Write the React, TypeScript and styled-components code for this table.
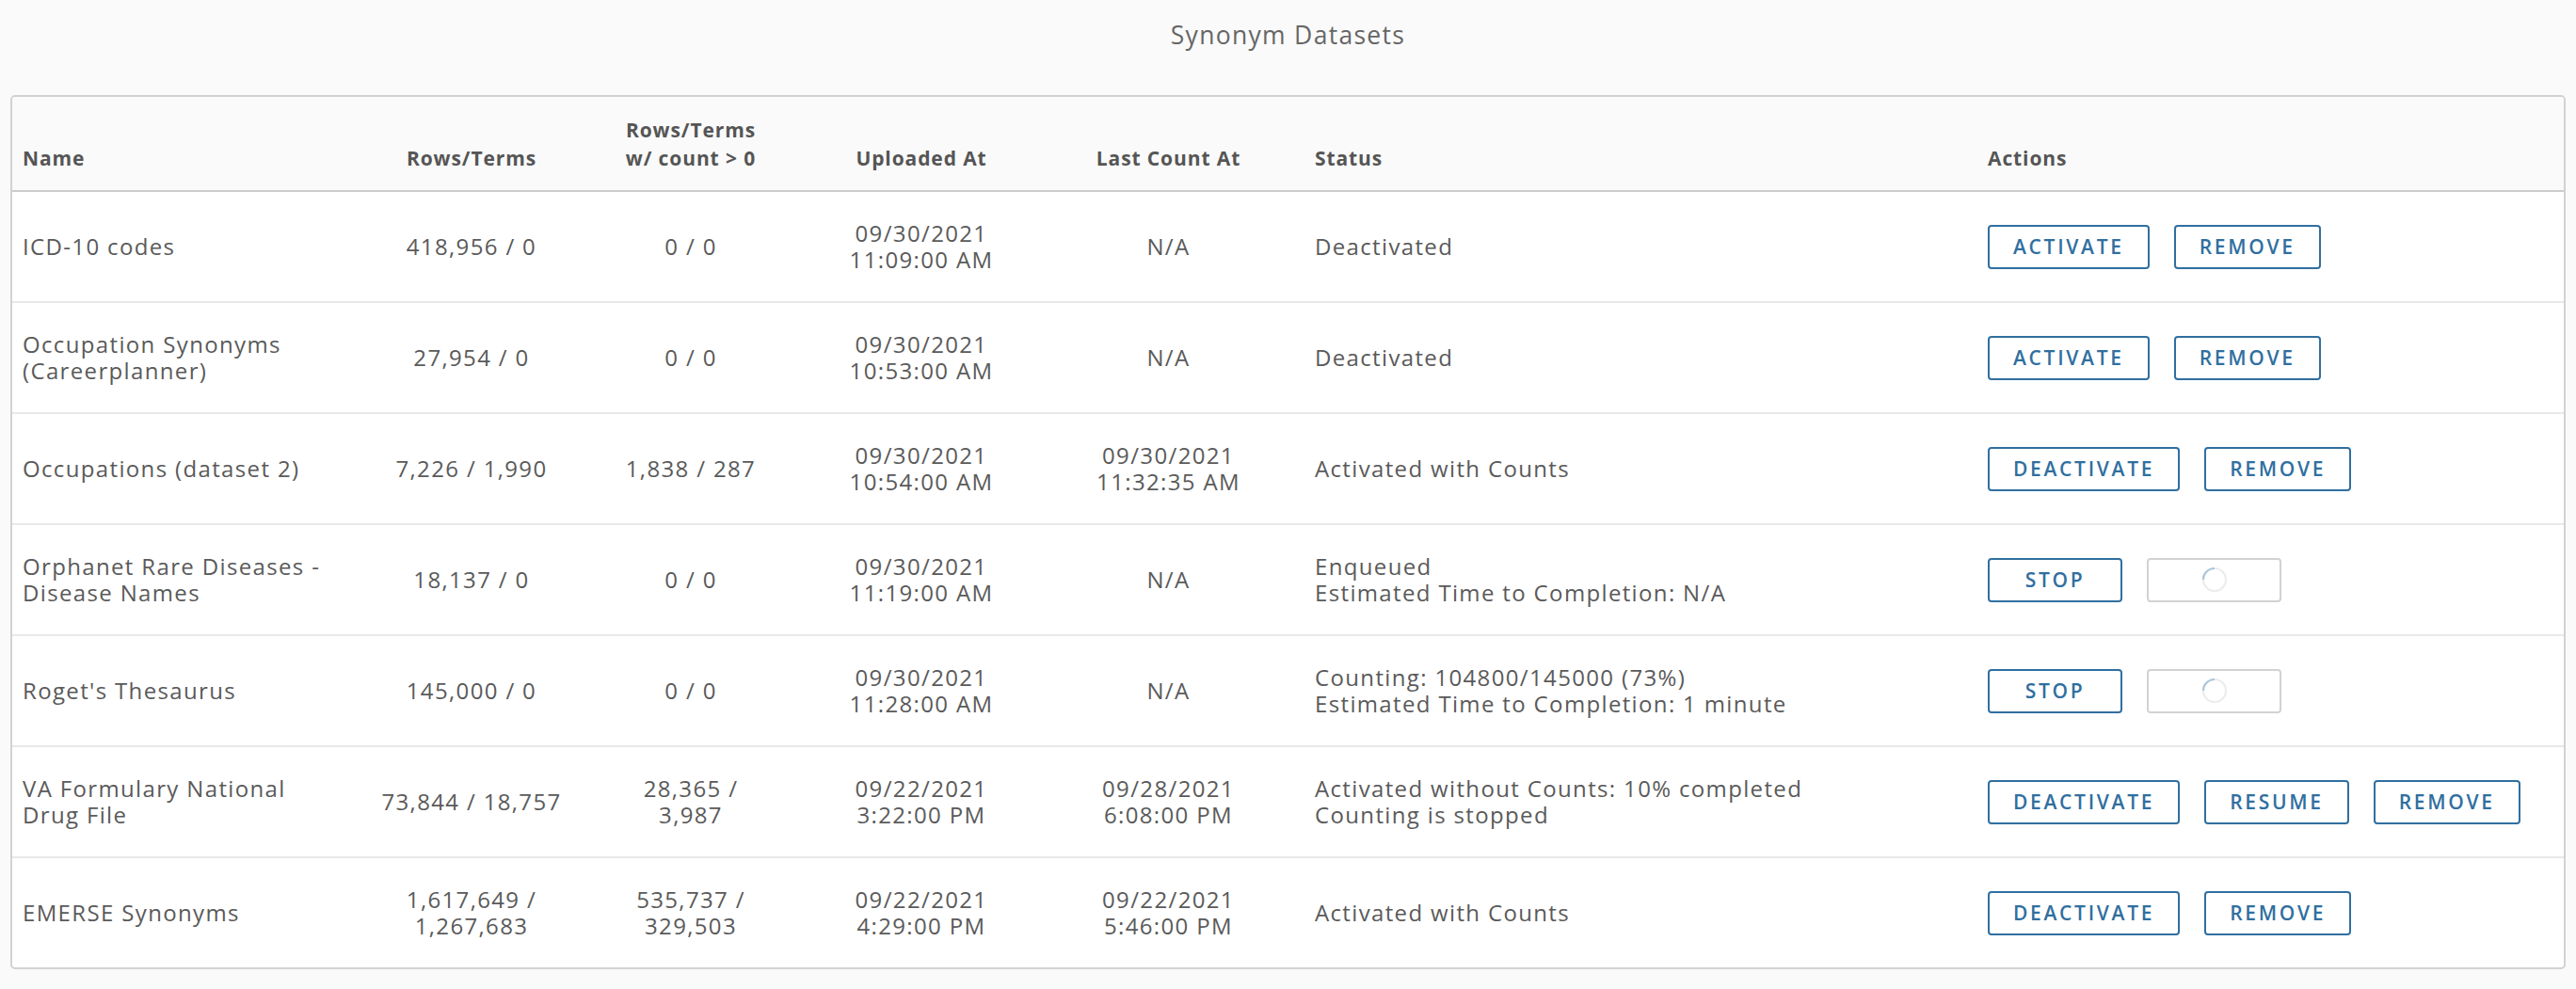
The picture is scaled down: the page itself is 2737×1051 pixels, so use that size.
import React from "react";
import styled, { createGlobalStyle } from "styled-components";

const GlobalStyle = createGlobalStyle`
  html, body {
    margin: 0;
    padding: 0;
    background: #fafafa;
  }
  body {
    font-family: "Open Sans", "Liberation Sans", sans-serif;
    color: #5a5a5a;
  }
`;

const COLUMNS = "382px 212px 254px 236px 289px 715px 1fr";

const Page = styled.div`
  display: flex;
  flex-direction: column;
  padding: 0 11px 21px;
  background: #fafafa;
`;

const Title = styled.h1`
  margin: 0;
  height: 101px;
  padding-top: 19px;
  box-sizing: border-box;
  text-align: center;
  font-size: 26.5px;
  line-height: 36px;
  font-weight: 400;
  letter-spacing: 1.3px;
  color: #666666;
`;

const Table = styled.div`
  border: 2px solid #d2d2d2;
  border-radius: 5px;
  overflow: hidden;
  background: #ffffff;
`;

const HeaderRow = styled.div`
  display: grid;
  grid-template-columns: ${COLUMNS};
  height: 101px;
  box-sizing: border-box;
  background: #fafafa;
  border-bottom: 2px solid #cccccc;
`;

const HeaderCell = styled.div<{ $align: "left" | "center" }>`
  display: flex;
  flex-direction: column;
  justify-content: flex-end;
  align-items: ${(p) => (p.$align === "center" ? "center" : "flex-start")};
  text-align: ${(p) => p.$align};
  padding: 0 11px 19px;
  font-size: 21px;
  line-height: 30px;
  font-weight: 700;
  letter-spacing: 0.9px;
  color: #555555;
  white-space: nowrap;
`;

const BodyRow = styled.div`
  display: grid;
  grid-template-columns: ${COLUMNS};
  height: 118px;
  box-sizing: border-box;
  border-bottom: 2px solid #e8e8e8;
  &:last-child {
    height: 116px;
    border-bottom: none;
  }
`;

const Cell = styled.div<{ $align: "left" | "center" }>`
  display: flex;
  flex-direction: column;
  justify-content: center;
  align-items: ${(p) => (p.$align === "center" ? "center" : "flex-start")};
  text-align: ${(p) => p.$align};
  padding: 0 11px;
  font-size: 24px;
  line-height: 28px;
  letter-spacing: 1.35px;
  color: #5a5a5a;
  white-space: nowrap;
`;

const Line = styled.span`
  display: block;
`;

const Actions = styled.div`
  display: flex;
  align-items: center;
  gap: 26px;
  padding: 0 11px;
`;

const ActionButton = styled.button`
  height: 47px;
  min-width: 143px;
  padding: 0 25px;
  box-sizing: border-box;
  display: inline-flex;
  align-items: center;
  justify-content: center;
  border: 2px solid #306fa0;
  border-radius: 4px;
  background: #ffffff;
  color: #306fa0;
  font-family: "Open Sans", "Liberation Sans", sans-serif;
  font-size: 21px;
  font-weight: 600;
  letter-spacing: 2.7px;
  cursor: pointer;

  &:disabled {
    border-color: #d2d2d2;
    cursor: default;
  }
`;

const Spinner = () => (
  <svg width="28" height="28" viewBox="0 0 28 28" aria-hidden="true">
    <circle cx="14" cy="14" r="12" fill="none" stroke="#ececec" strokeWidth="2.2" />
    <path d="M2 14 A12 12 0 0 1 14 2" fill="none" stroke="#aac6db" strokeWidth="2.2" />
  </svg>
);

type Action = { label?: string; busy?: boolean };

type Dataset = {
  name: string[];
  rows: string[];
  counts: string[];
  uploaded: string[];
  last: string[];
  status: string[];
  actions: Action[];
};

const DATA: Dataset[] = [
  {
    name: ["ICD-10 codes"],
    rows: ["418,956 / 0"],
    counts: ["0 / 0"],
    uploaded: ["09/30/2021", "11:09:00 AM"],
    last: ["N/A"],
    status: ["Deactivated"],
    actions: [{ label: "ACTIVATE" }, { label: "REMOVE" }],
  },
  {
    name: ["Occupation Synonyms", "(Careerplanner)"],
    rows: ["27,954 / 0"],
    counts: ["0 / 0"],
    uploaded: ["09/30/2021", "10:53:00 AM"],
    last: ["N/A"],
    status: ["Deactivated"],
    actions: [{ label: "ACTIVATE" }, { label: "REMOVE" }],
  },
  {
    name: ["Occupations (dataset 2)"],
    rows: ["7,226 / 1,990"],
    counts: ["1,838 / 287"],
    uploaded: ["09/30/2021", "10:54:00 AM"],
    last: ["09/30/2021", "11:32:35 AM"],
    status: ["Activated with Counts"],
    actions: [{ label: "DEACTIVATE" }, { label: "REMOVE" }],
  },
  {
    name: ["Orphanet Rare Diseases -", "Disease Names"],
    rows: ["18,137 / 0"],
    counts: ["0 / 0"],
    uploaded: ["09/30/2021", "11:19:00 AM"],
    last: ["N/A"],
    status: ["Enqueued", "Estimated Time to Completion: N/A"],
    actions: [{ label: "STOP" }, { busy: true }],
  },
  {
    name: ["Roget's Thesaurus"],
    rows: ["145,000 / 0"],
    counts: ["0 / 0"],
    uploaded: ["09/30/2021", "11:28:00 AM"],
    last: ["N/A"],
    status: ["Counting: 104800/145000 (73%)", "Estimated Time to Completion: 1 minute"],
    actions: [{ label: "STOP" }, { busy: true }],
  },
  {
    name: ["VA Formulary National", "Drug File"],
    rows: ["73,844 / 18,757"],
    counts: ["28,365 /", "3,987"],
    uploaded: ["09/22/2021", "3:22:00 PM"],
    last: ["09/28/2021", "6:08:00 PM"],
    status: ["Activated without Counts: 10% completed", "Counting is stopped"],
    actions: [{ label: "DEACTIVATE" }, { label: "RESUME" }, { label: "REMOVE" }],
  },
  {
    name: ["EMERSE Synonyms"],
    rows: ["1,617,649 /", "1,267,683"],
    counts: ["535,737 /", "329,503"],
    uploaded: ["09/22/2021", "4:29:00 PM"],
    last: ["09/22/2021", "5:46:00 PM"],
    status: ["Activated with Counts"],
    actions: [{ label: "DEACTIVATE" }, { label: "REMOVE" }],
  },
];

const HEADERS: { lines: string[]; align: "left" | "center" }[] = [
  { lines: ["Name"], align: "left" },
  { lines: ["Rows/Terms"], align: "center" },
  { lines: ["Rows/Terms", "w/ count > 0"], align: "center" },
  { lines: ["Uploaded At"], align: "center" },
  { lines: ["Last Count At"], align: "center" },
  { lines: ["Status"], align: "left" },
  { lines: ["Actions"], align: "left" },
];

const Lines = ({ lines }: { lines: string[] }) => (
  <>
    {lines.map((l, i) => (
      <Line key={i}>{l}</Line>
    ))}
  </>
);

export default function App() {
  return (
    <>
      <GlobalStyle />
      <Page>
        <Title>Synonym Datasets</Title>
        <Table>
          <HeaderRow>
            {HEADERS.map((h, i) => (
              <HeaderCell key={i} $align={h.align}>
                <Lines lines={h.lines} />
              </HeaderCell>
            ))}
          </HeaderRow>
          {DATA.map((d, i) => (
            <BodyRow key={i}>
              <Cell $align="left">
                <Lines lines={d.name} />
              </Cell>
              <Cell $align="center">
                <Lines lines={d.rows} />
              </Cell>
              <Cell $align="center">
                <Lines lines={d.counts} />
              </Cell>
              <Cell $align="center">
                <Lines lines={d.uploaded} />
              </Cell>
              <Cell $align="center">
                <Lines lines={d.last} />
              </Cell>
              <Cell $align="left">
                <Lines lines={d.status} />
              </Cell>
              <Actions>
                {d.actions.map((a, j) =>
                  a.busy ? (
                    <ActionButton key={j} disabled>
                      <Spinner />
                    </ActionButton>
                  ) : (
                    <ActionButton key={j}>{a.label}</ActionButton>
                  )
                )}
              </Actions>
            </BodyRow>
          ))}
        </Table>
      </Page>
    </>
  );
}
